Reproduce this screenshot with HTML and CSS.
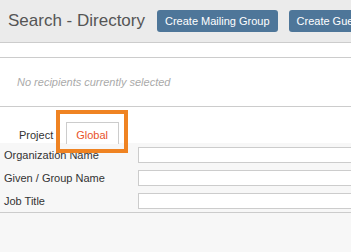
FILE: index.html
```html
<!DOCTYPE html>
<html lang="en">

<head>
    <meta charset="UTF-8">
    <meta name="viewport" content="width=device-width, initial-scale=1.0">
    <title>Search - Directory</title>
    <link rel="stylesheet" href="styles.css">
</head>

<body>
<div class="page">
    <!-- Title bar -->
    <div class="topbar">
        <h1>Search - Directory</h1>
        <button class="btn">Create Mailing Group</button>
        <button class="btn">Create Guest</button>
    </div>

    <div class="spacer"></div>

    <!-- Selected recipients -->
    <div class="recipients">
        <p>No recipients currently selected</p>
    </div>

    <!-- Tabs -->
    <div class="tabs">
        <span class="tab">Project</span>
        <span class="tab active">Global</span>
        <div class="highlight"></div>
    </div>

    <!-- Search form -->
    <div class="search-form">
        <div class="form-row">
            <label for="orgName">Organization Name</label>
            <input type="text" id="orgName">
        </div>
        <div class="form-row">
            <label for="givenName">Given / Group Name</label>
            <input type="text" id="givenName">
        </div>
        <div class="form-row">
            <label for="jobTitle">Job Title</label>
            <input type="text" id="jobTitle">
        </div>
    </div>
</div>
</body>

</html>
```

FILE: styles.css
```css
* {
    box-sizing: border-box;
    margin: 0;
    padding: 0;
}

body {
    font-family: "Liberation Sans", Arial, sans-serif;
    background-color: #f7f7f7;
    overflow: hidden;
}

.page {
    width: 351px;
    position: relative;
    overflow: hidden;
}

.topbar {
    display: flex;
    align-items: center;
    height: 43px;
    padding: 0 0 0 8px;
    background-color: #ebebeb;
    border-bottom: 1px solid #cccccc;
    white-space: nowrap;
}

h1 {
    font-size: 17px;
    font-weight: normal;
    color: #555;
    margin-right: 12px;
}

.btn {
    flex-shrink: 0;
    height: 22px;
    padding: 0 8px;
    margin-right: 11px;
    background-color: #4e7699;
    color: #fff;
    border: none;
    border-radius: 3px;
    font-family: inherit;
    font-size: 11px;
}

.spacer {
    height: 15px;
    background-color: #fff;
    border-bottom: 1px solid #cccccc;
}

.recipients {
    height: 49px;
    background-color: #fff;
    border-bottom: 1px solid #cccccc;
    display: flex;
    align-items: center;
    padding-left: 17px;
}

.recipients p {
    font-size: 11px;
    font-style: italic;
    color: #aaa;
}

.tabs {
    position: relative;
    height: 36px;
    background-color: #fff;
    display: flex;
    align-items: flex-end;
    padding-left: 6px;
}

.tab {
    font-size: 11px;
    color: #333;
    padding: 6px 12px 6px;
    height: 22px;
    border: 1px solid transparent;
    border-bottom: none;
    position: relative;
    top: 1px;
}

.tab.active {
    color: #e8532b;
    background-color: #fff;
    border-color: #cccccc;
    width: 53px;
    padding-left: 9px;
    margin-left: 0;
}

.highlight {
    position: absolute;
    left: 56px;
    top: 3px;
    width: 72px;
    height: 43px;
    border: 4px solid #ef8322;
    z-index: 2;
}

.search-form {
    padding: 4px 0 3px 4px;
    border-bottom: 1px solid #cccccc;
    display: flex;
    flex-direction: column;
    gap: 7px;
}

.form-row {
    display: flex;
    align-items: center;
    height: 16px;
}

label {
    flex-shrink: 0;
    width: 134px;
    font-size: 11px;
    color: #333;
}

input[type="text"] {
    flex-shrink: 0;
    width: 260px;
    height: 16px;
    border: 1px solid #cccccc;
    background-color: #fff;
}
```
